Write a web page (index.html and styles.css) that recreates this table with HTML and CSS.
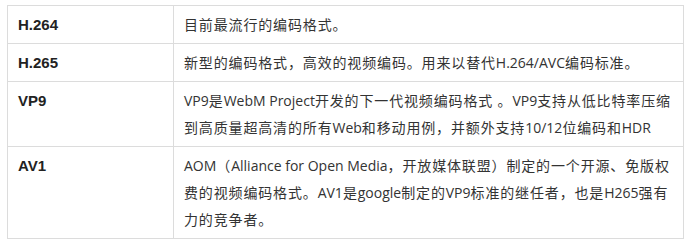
FILE: index.html
```html
<!DOCTYPE html>
<html lang="zh-CN">
<head>
<meta charset="utf-8">
<title>编码格式</title>
<link rel="stylesheet" href="styles.css">
</head>
<body>
<table class="codec-table">
  <tbody>
    <tr>
      <td class="name">H.264</td>
      <td class="desc">目前最流行的编码格式。</td>
    </tr>
    <tr>
      <td class="name">H.265</td>
      <td class="desc">新型的编码格式，高效的视频编码。用来以替代<span class="lt">H.264/AVC</span>编码标准。</td>
    </tr>
    <tr>
      <td class="name">VP9</td>
      <td class="desc"><span class="lt">VP9</span>是<span class="lt">WebM Project</span>开发的下一代视频编码格式 。<span class="lt">VP9</span>支持从低比特率压缩到高质量超高清的所有<span class="lt">Web</span>和移动用例，并额外支持<span class="lt">10/12</span>位编码和<span class="lt">HDR</span></td>
    </tr>
    <tr>
      <td class="name">AV1</td>
      <td class="desc"><span class="lt">AOM</span>（<span class="lt">Alliance for Open Media</span>，开放媒体联盟）制定的一个开源、免版权费的视频编码格式。<span class="lt">AV1</span>是<span class="lt">google</span>制定的<span class="lt">VP9</span>标准的继任者，也是<span class="lt">H265</span>强有力的竞争者。</td>
    </tr>
  </tbody>
</table>
</body>
</html>
```
FILE: styles.css
```css
html, body {
  margin: 0;
  background: #ffffff;
}

body {
  padding: 5px 9px 0 7px;
}

.codec-table {
  width: 677px;
  border-collapse: collapse;
  table-layout: fixed;
  color: #333333;
}

.codec-table td {
  border: 1px solid #dcdcdc;
  padding: 5px 10px;
  line-height: 27px;
  vertical-align: top;
  text-align: left;
}

.codec-table .name {
  width: 145px;
  font-family: "Liberation Sans", Arial, sans-serif;
  font-weight: bold;
  font-size: 15px;
  color: #222222;
}

.codec-table .desc {
  font-family: "Open Sans", "Noto Sans CJK SC", sans-serif;
  font-size: 14px;
  letter-spacing: 0.85px;
}

.codec-table .lt {
  letter-spacing: 0;
}
```
